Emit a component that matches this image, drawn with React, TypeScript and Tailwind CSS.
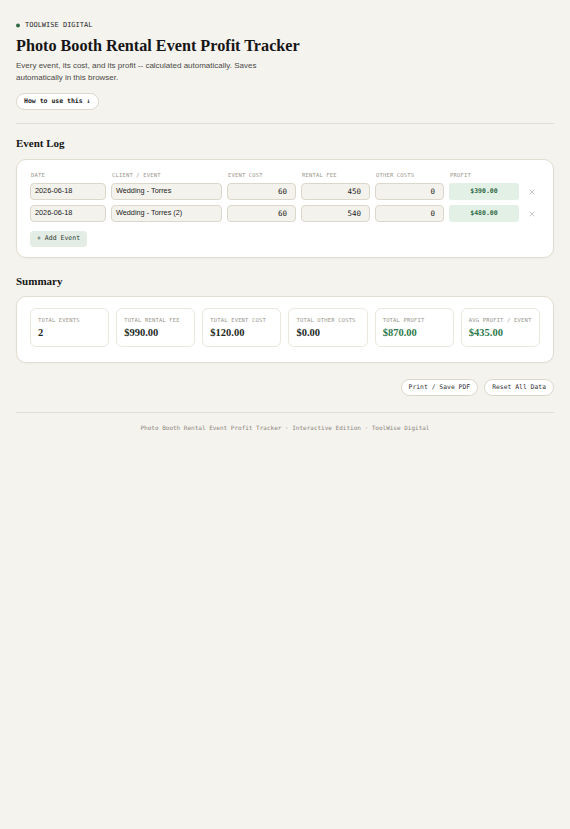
import { X } from "lucide-react";

type EventRow = {
  date: string;
  client: string;
  cost: number;
  fee: number;
  other: number;
};

const rows: EventRow[] = [
  { date: "2026-06-18", client: "Wedding - Torres", cost: 60, fee: 450, other: 0 },
  { date: "2026-06-18", client: "Wedding - Torres (2)", cost: 60, fee: 540, other: 0 },
];

const money = (n: number) => `$${n.toFixed(2)}`;

const mono = "font-['DejaVu_Sans_Mono','Liberation_Mono',monospace]";
const serif = "font-['Liberation_Serif','Times_New_Roman',serif]";
const sans = "font-['Liberation_Sans',Arial,sans-serif]";

const headers = ["DATE", "CLIENT / EVENT", "EVENT COST", "RENTAL FEE", "OTHER COSTS", "PROFIT", ""];

const inputCls =
  "h-[17px] rounded-[4px] border border-[#dcd7cb] bg-[#f4f2ec] flex items-center text-[#222]";

const pill =
  "h-[17px] rounded-full border border-[#dcd7cb] bg-white px-[7px] text-[6.4px] text-[#333]";

const EventLog = () => (
  <div className="mt-[9px] rounded-[10px] border border-[#e2ddd1] bg-white px-[13px] pt-[11px] pb-[10px] shadow-[0_1px_2px_rgba(0,0,0,0.03)]">
    <div className="grid grid-cols-[76px_111px_69px_69px_69px_70px_1fr] gap-x-[5px] gap-y-[5px]">
      {headers.map((h, i) => (
        <div key={i} className={`${mono} text-[5.5px] leading-[8px] tracking-[0.03em] text-[#9a968c] pl-[1px] -mb-[1px]`}>
          {h}
        </div>
      ))}
      {rows.map((r, i) => {
        const profit = r.fee - r.cost - r.other;
        return (
          <div key={i} className="contents">
            <div className={`${inputCls} ${sans} px-[4px] text-[7.3px]`}>{r.date}</div>
            <div className={`${inputCls} ${sans} px-[4px] text-[7.3px]`}>{r.client}</div>
            <div className={`${inputCls} ${mono} justify-end pr-[8px] text-[7.5px]`}>{r.cost}</div>
            <div className={`${inputCls} ${mono} justify-end pr-[8px] text-[7.5px]`}>{r.fee}</div>
            <div className={`${inputCls} ${mono} justify-end pr-[8px] text-[7.5px]`}>{r.other}</div>
            <div className={`${mono} h-[17px] rounded-[3px] bg-[#e2f0e5] flex items-center justify-center text-[6.5px] font-bold text-[#2f6a45]`}>
              {money(profit)}
            </div>
            <div className="flex items-center justify-center text-[#8a8780]">
              <X size={8} strokeWidth={1.4} />
            </div>
          </div>
        );
      })}
    </div>
    <button
      className={`${mono} mt-[7px] h-[16px] rounded-[4px] bg-[#e3ede6] px-[7px] text-[6.5px] text-[#2c3a31]`}
    >
      + Add Event
    </button>
  </div>
);

const Summary = () => {
  const totalFee = rows.reduce((s, r) => s + r.fee, 0);
  const totalCost = rows.reduce((s, r) => s + r.cost, 0);
  const totalOther = rows.reduce((s, r) => s + r.other, 0);
  const totalProfit = totalFee - totalCost - totalOther;
  const stats = [
    { label: "TOTAL EVENTS", value: String(rows.length), green: false },
    { label: "TOTAL RENTAL FEE", value: money(totalFee), green: false },
    { label: "TOTAL EVENT COST", value: money(totalCost), green: false },
    { label: "TOTAL OTHER COSTS", value: money(totalOther), green: false },
    { label: "TOTAL PROFIT", value: money(totalProfit), green: true },
    { label: "AVG PROFIT / EVENT", value: money(totalProfit / rows.length), green: true },
  ];
  return (
    <div className="mt-[8px] rounded-[10px] border border-[#e2ddd1] bg-white px-[13px] pt-[11px] pb-[15px] shadow-[0_1px_2px_rgba(0,0,0,0.03)]">
      <div className="grid grid-cols-6 gap-[7px]">
        {stats.map((s) => (
          <div key={s.label} className="h-[39px] rounded-[6px] border border-[#ebe7de] bg-white px-[7px] pt-[7px]">
            <div className={`${mono} text-[5.5px] leading-[8px] tracking-[0.03em] text-[#9a968c] whitespace-nowrap`}>
              {s.label}
            </div>
            <div
              className={`${serif} mt-[2px] text-[10.5px] leading-[13px] font-bold ${
                s.green ? "text-[#2e7a4c]" : "text-[#1e2a24]"
              }`}
            >
              {s.value}
            </div>
          </div>
        ))}
      </div>
    </div>
  );
};

const App = () => {
  return (
    <div className="min-h-screen bg-[#f5f3ee] px-4 pt-[21px] pb-10 text-[#1a1a1a]">
      <div className={`${mono} flex items-center gap-[5px] text-[7px] leading-[9px] text-[#2a2a2a]`}>
        <span className="h-[4px] w-[4px] -translate-y-[0.5px] rounded-full bg-[#2f6a45]" />
        TOOLWISE DIGITAL
      </div>
      <h1 className={`${serif} mt-[6px] text-[16.2px] leading-[20px] font-bold text-[#161616]`}>
        Photo Booth Rental Event Profit Tracker
      </h1>
      <p className={`${sans} mt-[4px] w-[262px] text-[8px] leading-[12px] text-[#4a4a46]`}>
        Every event, its cost, and its profit -- calculated automatically. Saves automatically in this browser.
      </p>
      <button
        className={`${mono} mt-[9px] h-[17px] rounded-full border border-[#dcd7cb] bg-white px-[7px] text-[6.5px] font-bold text-[#222]`}
      >
        How to use this ↓
      </button>
      <div className="mt-[13px] h-px bg-[#e2ded4]" />

      <h2 className={`${serif} mt-[12px] text-[11px] leading-[14px] font-bold text-[#161616]`}>Event Log</h2>
      <EventLog />

      <h2 className={`${serif} mt-[16px] text-[11px] leading-[14px] font-bold text-[#161616]`}>Summary</h2>
      <Summary />

      <div className="mt-[16px] flex justify-end gap-[6px]">
        <button className={`${mono} ${pill}`}>Print / Save PDF</button>
        <button className={`${mono} ${pill}`}>Reset All Data</button>
      </div>
      <div className="mt-[16px] h-px bg-[#e2ded4]" />
      <p className={`${mono} mt-[11px] text-center text-[6px] leading-[8px] text-[#8c887e]`}>
        Photo Booth Rental Event Profit Tracker · Interactive Edition · ToolWise Digital
      </p>
    </div>
  );
};

export default App;
